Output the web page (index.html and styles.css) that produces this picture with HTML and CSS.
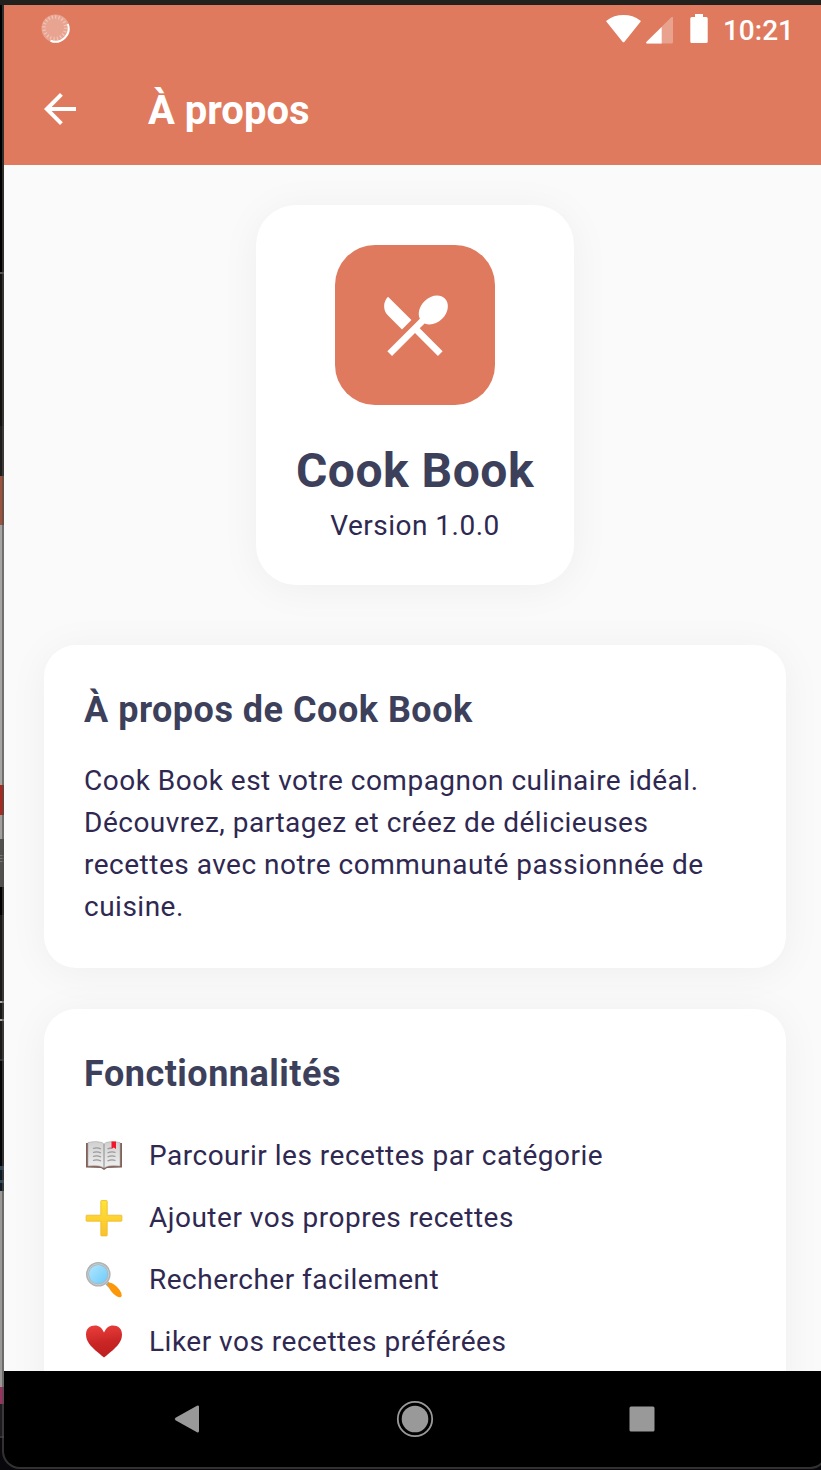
FILE: index.html
```html
<!DOCTYPE html>
<html lang="fr">
<head>
<meta charset="utf-8">
<title>À propos</title>
<link rel="stylesheet" href="styles.css">
</head>
<body>
<div class="desktop">
  <div class="phone">
    <header class="header">
      <div class="status">
        <svg class="spinner" width="30" height="30" viewBox="0 0 30 30">
          <circle cx="14.500" cy="14.500" r="14" fill="#fff" opacity=".32"/>
          <circle cx="13.800" cy="13.700" r="10.800" fill="none" stroke="#fff" stroke-opacity=".35" stroke-width="3.400" stroke-dasharray="1.200 2.193"/>
          <path d="M26.800 10A13.200 13.200 0 0 1 9.500 26.700" fill="none" stroke="#fff" stroke-width="2"/>
        </svg>
        <div class="status-right">
          <svg width="35" height="28" viewBox="0 0 35 28"><path d="M.5 6.800Q-.2 6 .8 5.400Q8 0 17.500 0T34.200 5.400Q35.200 6 34.500 6.800L18.500 26.700Q17.500 27.900 16.500 26.700Z" fill="#fff"/></svg>
          <svg class="signal" width="27" height="28" viewBox="0 0 27 28"><path d="M1 27.500Q-.5 27.200 .600 25.800L25 1.500Q27 0 27 2V26Q27 27.500 25.500 27.500Z" fill="#fff" opacity=".3"/><path d="M1 27.500Q-.5 27.200 .600 25.800L15.700 11V27.500Z" fill="#fff"/></svg>
          <svg class="battery" width="18" height="29" viewBox="0 0 18 29"><path d="M5 0h8v3h3.200q1.500 0 1.500 1.500v23q0 1.500-1.500 1.500H1.800q-1.500 0-1.500-1.500v-23Q.3 3 1.800 3H5Z" fill="#fff"/></svg>
          <span class="time">10:21</span>
        </div>
      </div>
      <div class="appbar">
        <svg width="48" height="48" viewBox="0 0 24 24"><path d="M20 11H7.830l5.590-5.590L12 4l-8 8 8 8 1.410-1.410L7.830 13H20v-2z" fill="#fff"/></svg>
        <h1 class="title">À propos</h1>
      </div>
    </header>
    <main class="content">
      <section class="app-card">
        <div class="logo">
          <svg width="80" height="80" viewBox="0 0 24 24"><path fill="#fff" d="M8.100 13.340l2.830-2.830L3.910 3.500c-1.560 1.560-1.560 4.090 0 5.660l4.190 4.180zm6.780-1.810c1.530.710 3.680.210 5.270-1.380 1.910-1.910 2.280-4.650.810-6.120-1.460-1.460-4.200-1.100-6.120.810-1.590 1.590-2.090 3.740-1.380 5.270L3.700 19.870l1.410 1.410L12 14.410l6.880 6.880 1.410-1.410L13.410 13l1.470-1.470z"/></svg>
        </div>
        <h2 class="app-name">Cook Book</h2>
        <p class="version">Version 1.0.0</p>
      </section>
      <section class="card">
        <h3 class="card-title">À propos de Cook Book</h3>
        <p class="text">Cook Book est votre compagnon culinaire idéal. Découvrez, partagez et créez de délicieuses recettes avec notre communauté passionnée de cuisine.</p>
      </section>
      <section class="card features">
        <h3 class="card-title">Fonctionnalités</h3>
        <ul class="list">
          <li class="item">
            <svg width="40" height="40" viewBox="0 0 40 40">
              <defs><linearGradient id="page" x2="0" y2="1"><stop stop-color="#d0d0d0"/><stop offset="1" stop-color="#f0f0f0"/></linearGradient></defs>
              <path d="M2 8h2v20l14 2 2 1 2-1 14-2V8h2v24.500l-15 .5-3 2-3-2-15-.5Z" fill="#826159"/>
              <path d="M4 7.500q8-2 14 0l2 1.500 2-1.500q6-2 14 0v23.500q-11-1-14 1l-2 1-2-1Q15 30 4 31Z" fill="url(#page)" stroke="#aaa" stroke-width=".6"/>
              <path d="M20 9v24" stroke="#999" stroke-width="1.200"/>
              <path d="M9 13.500q4-1.500 8 0.500M9 17.500q4-1.500 8 0.500M9 21.500q4-1.500 8 0.500M9 25.500q4-1.500 8 0.500M23.500 14q2-1 4-1M23.500 18q4-2 8-.5M23.500 22q4-2 8-.5M23.500 26q4-2 8-.5" fill="none" stroke="#9a9a9a" stroke-width="1.300"/>
              <path d="M27.500 6.500h4.500v7.500l-2.200-1.500-2.300 1.500Z" fill="#f5152b"/>
            </svg>
            <span>Parcourir les recettes par catégorie</span>
          </li>
          <li class="item">
            <svg width="40" height="40" viewBox="0 0 40 40">
              <defs><linearGradient id="plus" x2="0" y2="1"><stop stop-color="#fde535"/><stop offset="1" stop-color="#fbc02d"/></linearGradient></defs>
              <path d="M17.500 3.500h5q.7 0 .7.700v14h14q.7 0 .7.700v4.600q0 .7-.7.700h-14v14q0 .7-.7.700h-5q-.7 0-.7-.7v-14h-14q-.7 0-.7-.7v-4.600q0-.7.700-.7h14v-14q0-.7.700-.7Z" fill="url(#plus)" stroke="#eeb929" stroke-width=".8"/>
            </svg>
            <span>Ajouter vos propres recettes</span>
          </li>
          <li class="item">
            <svg width="40" height="40" viewBox="0 0 40 40">
              <defs><linearGradient id="glass" x2="1" y2="1"><stop stop-color="#b5e8ff"/><stop offset="1" stop-color="#68c9fa"/></linearGradient></defs>
              <path d="m23 24 5 5" stroke="#a6a6a6" stroke-width="4"/>
              <path d="M24.500 27.500q-2-2 0-3.400 1.700-1.200 4.500.7 6 4 8.300 9.200 1 3-.5 4-1.500.8-4.500-1-5-3-7.800-9.500Z" fill="#fb9709"/>
              <circle cx="14.300" cy="15.300" r="10.800" fill="url(#glass)" stroke="#adb2b5" stroke-width="3"/>
              <circle cx="14.300" cy="15.300" r="10.500" fill="none" stroke="#ced4d7" stroke-width=".8"/>
            </svg>
            <span>Rechercher facilement</span>
          </li>
          <li class="item">
            <svg width="40" height="40" viewBox="0 0 40 40">
              <defs><linearGradient id="heart" x2=".15" y2="1"><stop stop-color="#eb403c"/><stop offset=".6" stop-color="#c92525"/><stop offset="1" stop-color="#bf2020"/></linearGradient></defs>
              <path d="M20 36.500Q18.500 35.500 14 31.500C6 25 2 20 2 13.500 2 7.500 6 4.500 11 4.500c4 0 7 2.500 9 7 2-4.500 5-7 9-7 5 0 9 3 9 9 0 6.500-4 11.500-12 18q-4.500 4-6 5Z" fill="url(#heart)"/>
            </svg>
            <span>Liker vos recettes préférées</span>
          </li>
        </ul>
      </section>
    </main>
    <nav class="nav">
      <svg width="26" height="28" viewBox="0 0 26 28"><path d="M23 .800Q25 0 25 2v24q0 2-2 1.200L1.500 15.200q-1.500-1.200 0-2.400Z" fill="#999"/></svg>
      <svg width="38" height="38" viewBox="0 0 38 38"><circle cx="19" cy="19" r="13.300" fill="#999"/><circle cx="19" cy="19" r="17.200" fill="none" stroke="#999" stroke-width="1.800"/></svg>
      <svg width="26" height="26" viewBox="0 0 26 26"><rect x=".5" y=".5" width="25" height="25" rx="1.500" fill="#999"/></svg>
    </nav>
  </div>
</div>
</body>
</html>
```
FILE: styles.css
```css
* { box-sizing: border-box; margin: 0; padding: 0; }
body { font-family: Roboto, "Noto Sans", sans-serif; color: #2f2851; overflow: hidden; }
svg { display: block; flex: none; }

/* slice of the desktop windows visible beside the emulator */
.desktop {
  width: 821px;
  height: 1470px;
  overflow: hidden;
  padding: 5px 0 0 2px;
  background: linear-gradient(to bottom,
    #22211e 0 5px, #000 5px 272px, #555 272px 274px, #11110e 274px 426px, #1d1d1b 426px 476px,
    #98543f 476px 525px, #a4a4a2 525px 785px, #a72a20 785px 815px, #a09f9d 815px 839px,
    #50504f 839px 855px, #777 855px 856px, #50504f 856px 858px, #777 858px 859px,
    #50504f 859px 861px, #777 861px 862px, #50504f 862px 887px, #000 887px 915px,
    #1a1917 915px 1001px, #aaa 1001px 1003px, #171715 1003px 1019px, #aaa 1019px 1021px,
    #1a1917 1021px 1059px, #333 1059px 1061px, #030507 1061px 1166px, #30475a 1166px 1170px,
    #0d1a24 1170px 1180px, #344b5c 1180px 1183px, #101d28 1183px 1191px, #999897 1191px 1387px,
    #963460 1387px 1404px, #1c1b1e 1404px 1436px, #343337 1436px 1438px, #08070b 1438px);
}
.phone {
  width: 826px;
  height: 1464px;
  display: flex;
  flex-direction: column;
  border: 2px solid rgba(80, 78, 76, .6);
  border-top: 0;
  border-radius: 0 0 18px 18px;
  background: #000 padding-box;
  overflow: hidden;
}
.header { flex: none; height: 160px; background: #df7a5e; color: #fff; }
.status { height: 48px; display: flex; justify-content: space-between; padding: 9px 32px 0 37px; }
.status-right { display: flex; align-items: flex-start; }
.status-right > svg:first-child { margin-top: 1px; }
.signal { margin: 2px 0 0 5px; }
.battery { margin-left: 17px; }
.time { margin-left: 15px; font-size: 28px; line-height: 34px; font-weight: 500; }
.appbar { height: 112px; display: flex; align-items: center; padding: 0 32px; gap: 64px; }
.title { font-size: 40px; font-weight: 700; line-height: 48px; padding-top: 4px; }

.content {
  height: 1206px;
  flex: none;
  overflow: hidden;
  padding: 40px;
  background: #fafafa;
  display: flex;
  flex-direction: column;
}
.app-card, .card { background: #fff; box-shadow: 0 4px 40px rgba(0, 0, 0, .05); flex: none; }
.app-card {
  align-self: center;
  width: 318px;
  height: 380px;
  padding-top: 40px;
  border-radius: 40px;
  display: flex;
  flex-direction: column;
  align-items: center;
}
.logo { width: 160px; height: 160px; border-radius: 40px; background: #df7a5e; display: grid; place-items: center; }
.app-name { margin-top: 32px; font-size: 48px; line-height: 68px; letter-spacing: .5px; color: #3d405b; white-space: nowrap; }
.version { margin-top: 1px; font-size: 28px; line-height: 40px; letter-spacing: .5px; }
.card { margin-top: 60px; padding: 40px; border-radius: 32px; height: 323px; }
.features { margin-top: 41px; height: 460px; }
.card-title { font-size: 36px; line-height: 50px; letter-spacing: .5px; color: #3d405b; }
.text { margin-top: 25px; font-size: 28px; line-height: 42px; letter-spacing: .5px; }
.list { list-style: none; margin-top: 25px; }
.item { display: flex; align-items: center; gap: 25px; height: 62px; font-size: 28px; letter-spacing: .5px; }

.nav { flex: 1; display: flex; justify-content: space-between; align-items: center; padding: 0 171px 0 170px; }
```
